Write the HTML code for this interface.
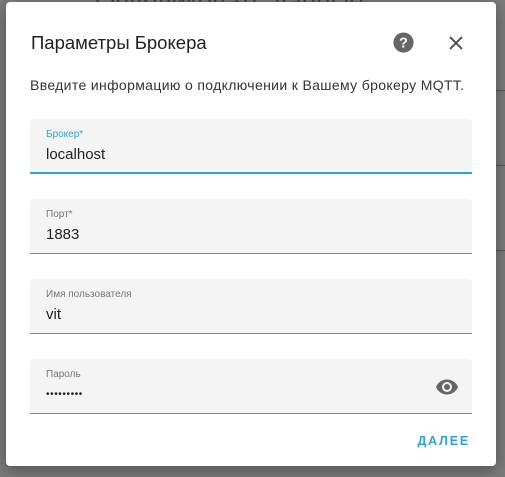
<!DOCTYPE html>
<html><head><meta charset="utf-8"><style>
*{margin:0;padding:0;box-sizing:border-box}
body{width:505px;height:477px;background:#7b7b7b;position:relative;overflow:hidden;font-family:"Liberation Sans",sans-serif}
.bgtext{position:absolute;left:95px;top:-14px;font-size:26px;color:#222;opacity:.6}
.bgline{position:absolute;left:496px;height:1px;width:9px;background:#555}
.dlg{position:absolute;left:6px;top:2px;width:490px;height:464px;background:#fff;border-radius:4px;box-shadow:0 4px 16px rgba(0,0,0,.35)}
h1{position:absolute;left:25px;top:30px;font-size:18.5px;font-weight:normal;color:#212121}
.desc{position:absolute;left:24px;top:75px;font-size:14px;color:#333;letter-spacing:0.35px}
.f{position:absolute;left:24px;width:442px;height:55px;background:#f4f4f4;border-radius:4px 4px 0 0;border-bottom:1px solid #888}
.f .l{position:absolute;left:16px;top:10px;font-size:10px;color:#777}
.f .v{position:absolute;left:16px;top:27px;font-size:15px;color:#222}
.f.a{border-bottom:2px solid #2fa3d8}
.f.a .l{color:#2fa3d8}
.btn{position:absolute;right:26px;top:432px;font-size:12.5px;font-weight:bold;color:#2fa3d8;letter-spacing:1.8px}
</style></head><body>
<div class="bgtext">Опубликовать данные</div>
<div class="bgline" style="top:90px"></div>
<div class="bgline" style="top:165px"></div>
<div class="bgline" style="top:250px"></div>
<div class="dlg">
<h1>Параметры Брокера</h1>
<svg style="position:absolute;left:386px;top:29px" width="23" height="23" viewBox="0 0 24 24"><circle cx="12" cy="12" r="10.5" fill="#666"/><text x="12" y="17" text-anchor="middle" font-family="Liberation Sans" font-weight="bold" font-size="15" fill="#fff">?</text></svg>
<svg style="position:absolute;left:440px;top:31px" width="20" height="20" viewBox="0 0 20 20"><path d="M4 4L16 16M16 4L4 16" stroke="#555" stroke-width="2"/></svg>
<div class="desc">Введите информацию о подключении к Вашему брокеру MQTT.</div>
<div class="f a" style="top:117px"><div class="l">Брокер*</div><div class="v">localhost</div></div>
<div class="f" style="top:197px"><div class="l">Порт*</div><div class="v">1883</div></div>
<div class="f" style="top:277px"><div class="l">Имя пользователя</div><div class="v">vit</div></div>
<div class="f" style="top:357px"><div class="l">Пароль</div><div class="v" style="font-size:10px;top:30px;letter-spacing:0.6px">•••••••••</div>
<svg style="position:absolute;left:405px;top:16px" width="24" height="24" viewBox="0 0 24 24"><path fill="#666" d="M12 4.5C7 4.5 2.7 7.6 1 12c1.7 4.4 6 7.5 11 7.5s9.3-3.1 11-7.5c-1.7-4.4-6-7.5-11-7.5zM12 17a5 5 0 1 1 0-10 5 5 0 0 1 0 10zm0-8a3 3 0 1 0 0 6 3 3 0 0 0 0-6z"/></svg></div>
<div class="btn">ДАЛЕЕ</div>
</div>
</body></html>
